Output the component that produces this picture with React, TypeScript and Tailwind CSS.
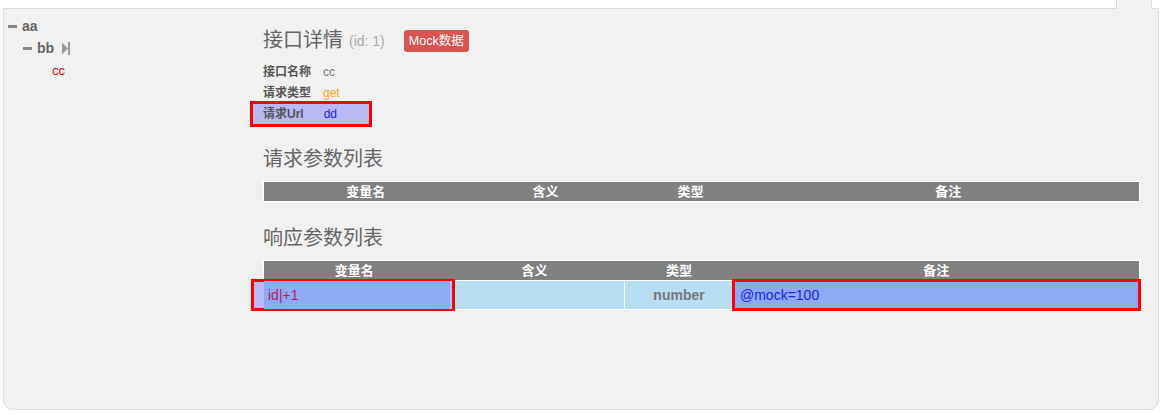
import React from "react";

const font = { fontFamily: '"Liberation Sans", Arial, "Noto Sans CJK SC", sans-serif' };

const Minus = () => <span className="inline-block w-[9px] h-[3px] bg-[#888] mr-[5px] align-middle" />;

const StepIcon = () => (
    <svg width="8" height="13" viewBox="0 0 8 13" className="ml-[8px] mt-[1px]">
        <path d="M0 0.5 L6 6.5 L0 12.5 Z" fill="#999" />
        <rect x="6" y="0" width="2" height="13" fill="#999" />
    </svg>
);

// red highlight box laid over an element
const Highlight = ({ className }: { className: string }) => (
    <div className={`absolute border-[3px] border-[#ff0000] pointer-events-none ${className}`} />
);

const Tree = () => (
    <div className="w-[259px] shrink-0 pt-[8px] pl-[4px] text-[#666]">
        <div className="flex items-center h-[18px] font-bold text-[14px]">
            <Minus />aa
        </div>
        <div className="pl-[15px] mt-[4px]">
            <div className="flex items-center h-[18px] font-bold text-[14px]">
                <Minus />bb<StepIcon />
            </div>
            <div className="pl-[29px] mt-[6px] text-[13px] text-[#e00000] h-[16px] leading-[16px]">cc</div>
        </div>
    </div>
);

const InfoRow = ({ label, children }: { label: string; children: React.ReactNode }) => (
    <div className="flex items-center h-[21px] text-[12px]">
        <span className="font-bold text-[#555] mr-[12px]">{label}</span>
        {children}
    </div>
);

const RequestTable = () => (
    <table className="w-full border-collapse border border-white text-[13px] text-white">
        <thead>
            <tr className="bg-[#808080] h-[20px]">
                <th className="w-[204px] font-bold leading-[19px]">变量名</th>
                <th className="w-[156px] font-bold leading-[19px]">含义</th>
                <th className="w-[134px] font-bold leading-[19px]">类型</th>
                <th className="font-bold leading-[19px]">备注</th>
            </tr>
        </thead>
    </table>
);

const ResponseTable = () => (
    <table className="w-full border-collapse border border-white text-[13px]">
        <thead>
            <tr className="bg-[#808080] h-[20px] text-white">
                <th className="w-[181px] font-bold leading-[19px]">变量名</th>
                <th className="w-[180px] font-bold leading-[19px]">含义</th>
                <th className="w-[109px] font-bold leading-[19px]">类型</th>
                <th className="font-bold leading-[19px]">备注</th>
            </tr>
        </thead>
        <tbody>
            <tr className="h-[29px]">
                <td className="relative bg-[#8caaf5] text-[#c2185b] text-[14px] pl-[4px] border-t border-white">
                    <Highlight className="-left-[13px] -top-[2px] -bottom-[2px] -right-[11px] bg-[#b9b9f3]" />
                    <div className="absolute left-0 top-0 bottom-0 right-[-8px] bg-[#8caaf5] border-r-2 border-r-[#b9c3f3]" />
                    <span className="relative">id|+1</span>
                </td>
                <td className="bg-[#b8def4] border-l border-t border-white" />
                <td className="bg-[#b8def4] border-l border-t border-white text-center font-bold text-[14px] text-[#777]">number</td>
                <td className="relative bg-[#8caaf5] text-[#2222ee] text-[14px] pl-[6px] border-l border-t border-white">
                    <Highlight className="-left-[2px] -top-[2px] -bottom-[2px] -right-[2px]" />
                    <span className="relative">@mock=100</span>
                </td>
            </tr>
        </tbody>
    </table>
);

export default function App() {
    return (
        <div className="relative w-[1163px] h-[414px] bg-white overflow-hidden" style={font}>
            <div className="absolute left-[1116px] top-0 w-[36px] h-[9px] bg-[#f1f1f1] border-x border-[#ddd]" />
            <div className="ml-[3px] mt-[8px] w-[1156px] h-[402px] border border-[#ddd] rounded-b-[10px] bg-[#f1f1f1] flex">
                <Tree />
                <div className="flex-1 pr-[18px] pt-[17px]">
                    <div className="flex items-center h-[27px]">
                        <span className="text-[20px] text-[#666]">接口详情</span>
                        <span className="text-[14px] text-[#aaa] ml-[6px] mt-[3px]">(id: 1)</span>
                        <span className="ml-[19px] mt-[2px] bg-[#d9534f] text-white text-[12.5px] rounded-[3px] px-[5px] h-[22px] leading-[22px]">Mock数据</span>
                    </div>
                    <div className="mt-[8px]">
                        <InfoRow label="接口名称"><span className="text-[#777]">cc</span></InfoRow>
                        <InfoRow label="请求类型"><span className="text-[#f5a623]">get</span></InfoRow>
                        <div className="relative">
                            <Highlight className="-left-[13px] -top-[2px] w-[122px] h-[26px] bg-[#b8b8f5]" />
                            <div className="relative">
                                <InfoRow label="请求Url"><span className="text-[#2222ee] ml-[8px]">dd</span></InfoRow>
                            </div>
                        </div>
                    </div>
                    <div className="text-[20px] text-[#666] mt-[22px] h-[26px] leading-[26px]">请求参数列表</div>
                    <div className="mt-[9px]">
                        <RequestTable />
                    </div>
                    <div className="text-[20px] text-[#666] mt-[23px] h-[26px] leading-[26px]">响应参数列表</div>
                    <div className="mt-[9px]">
                        <ResponseTable />
                    </div>
                </div>
            </div>
        </div>
    );
}
